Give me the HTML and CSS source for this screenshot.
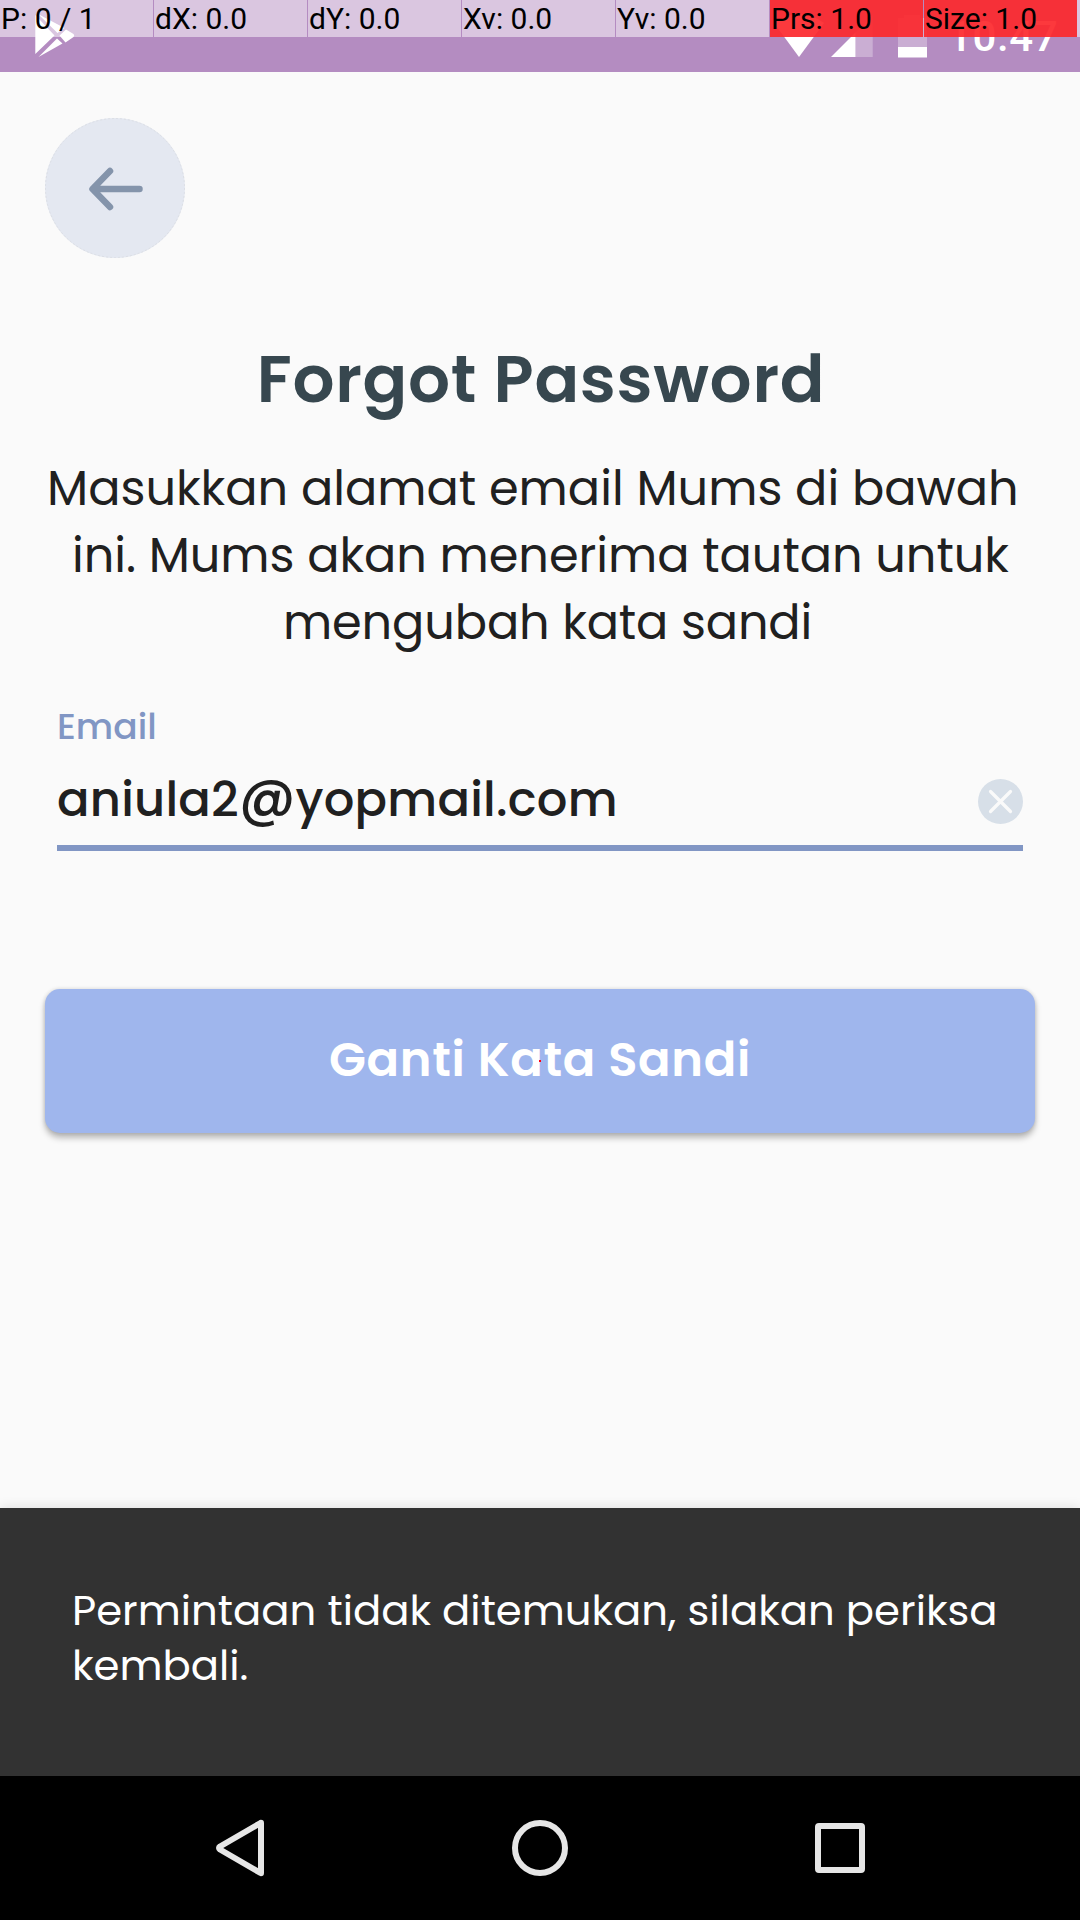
FILE: index.html
```html
<!DOCTYPE html>
<html lang="id">
<head>
<meta charset="utf-8">
<title>Forgot Password</title>
<link rel="stylesheet" href="styles.css">
</head>
<body>
<div class="screen">
  <header class="status">
    <svg class="status-icons" viewBox="0 0 1080 72" width="1080" height="72">
      <g fill="#fff">
        <path d="M35.300 15v39L54.500 35.500zM38 14l19.500 19 7-5zM59.500 35.500l6.500-6 7.500 4.500q1.500 1.500 0 3l-8 5.500zM57 38.500l5.500 5-24 13.500z"/>
        <path d="M774 23q25-18 50 0l-25 34z"/>
        <path d="M831 57l24.500-24.500V57z"/>
        <path opacity=".3" d="M855.500 32.500L872.700 15v42h-17.200z"/>
        <path opacity=".3" d="M898 18h6v-3h16v3h7v29h-29z"/>
        <path d="M898 47h29v10.500h-29z"/>
      </g>
    </svg>
    <span class="clock">10.47</span>
    <div class="pointer">
      <span class="cell">P: 0 / 1</span>
      <span class="cell">dX: 0.0</span>
      <span class="cell">dY: 0.0</span>
      <span class="cell">Xv: 0.0</span>
      <span class="cell">Yv: 0.0</span>
      <span class="cell hot">Prs: 1.0</span>
      <span class="cell hot">Size: 1.0</span>
      <span class="tail"></span>
    </div>
  </header>
  <main class="content">
    <button class="back" aria-label="Back">
      <svg viewBox="0 0 140 140" width="140" height="140" fill="none" stroke="#8494ab" stroke-width="6.500" stroke-linecap="round" stroke-linejoin="round"><circle cx="70" cy="70" r="69.500" stroke="#dcdfe5" stroke-width="1" stroke-dasharray="2 2" stroke-linecap="butt"/><path d="M94.500 71H48M65 53L47.500 71 65 89"/></svg>
    </button>
    <h1 class="title">Forgot Password</h1>
    <p class="lead"><span class="l1">Masukkan alamat email Mums di bawah</span><span class="l2">ini. Mums akan menerima tautan untuk</span><span class="l3">mengubah kata sandi</span></p>
    <div class="field">
      <label class="label">Email</label>
      <div class="row">
        <span class="value">aniula2<span class="at">@</span>yopmail.com</span>
        <svg class="clear" viewBox="0 0 45 45" width="45" height="45"><circle cx="22.500" cy="22.500" r="22.500" fill="#d7dfe8"/><path d="M12.500 12.500l20 20M32.500 12.500l-20 20" stroke="#fafafa" stroke-width="3.200" stroke-linecap="round"/></svg>
      </div>
    </div>
    <button class="submit"><span>Ganti Kata Sandi</span><i class="dot"></i></button>
  </main>
  <div class="snackbar"><p class="message">Permintaan tidak ditemukan, silakan periksa<br>kembali.</p></div>
  <nav class="nav">
    <svg viewBox="0 0 60 60" width="60" height="60"><path d="M51 5v50q0 .5-.5 0L10 31.500q-2-1.500 0-3L50.500 5q.5-.5.5 0z"/></svg>
    <svg viewBox="0 0 60 60" width="60" height="60"><circle cx="30" cy="30" r="25"/></svg>
    <svg viewBox="0 0 60 60" width="60" height="60"><rect x="8" y="8" width="44" height="44" rx="1"/></svg>
  </nav>
</div>
</body>
</html>
```
FILE: styles.css
```css
* { box-sizing: border-box; }
body {
  margin: 0;
  font-family: Poppins, Inter, "Open Sans", sans-serif;
  font-feature-settings: "cv11" 1;
  color: #202020;
}
h1, p { margin: 0; }
button { border: 0; padding: 0; font: inherit; font-feature-settings: inherit; }
.screen {
  width: 1080px;
  height: 1920px;
  display: flex;
  flex-direction: column;
  background: #fafafa;
  overflow: hidden;
}
.status {
  position: relative;
  height: 72px;
  flex: none;
  background: #b48cc1;
}
.status-icons { display: block; }
.clock {
  position: absolute;
  left: 948px;
  top: 12px;
  line-height: 50px;
  font-family: Roboto, sans-serif;
  font-size: 42px;
  font-weight: 500;
  letter-spacing: .6px;
  color: #fff;
}
.pointer {
  position: absolute;
  left: 0;
  top: 0;
  display: flex;
  gap: 1px;
}
.cell {
  width: 153px;
  height: 37px;
  padding-left: 1px;
  font: 30px/37px Roboto, sans-serif;
  color: #000;
  white-space: nowrap;
  background: rgba(255, 255, 255, .5);
}
.hot { background: rgba(252, 40, 45, .92); }
.tail {
  width: 3px;
  height: 37px;
  margin-left: -1px;
  background: rgba(255, 255, 255, .5);
}
.content {
  flex: 1;
  display: flex;
  flex-direction: column;
  padding: 46px 45px 0;
}
.back {
  width: 140px;
  height: 140px;
  border-radius: 50%;
  background: #e4e8f1;
}
.back svg { display: block; }
.title {
  margin-top: 81px;
  padding-left: 2px;
  line-height: 80px;
  font-size: 66px;
  font-weight: 600;
  letter-spacing: .7px;
  color: #37474f;
  text-align: center;
}
.lead {
  margin-top: 36px;
  display: flex;
  flex-direction: column;
  font-size: 47.800px;
  line-height: 67px;
  white-space: nowrap;
}
.lead span { align-self: flex-start; }
.l1 { margin-left: 2px; }
.l2 { margin-left: 27px; letter-spacing: -.04px; }
.l3 { margin-left: 238px; letter-spacing: -.13px; }
.field {
  margin: 46px 12px 0;
  height: 149px;
  border-bottom: 6px solid #8196c4;
}
.label {
  display: block;
  line-height: 50px;
  font-size: 36px;
  font-weight: 500;
  color: #8196c4;
}
.row {
  margin-top: 18px;
  height: 60px;
  display: flex;
  justify-content: space-between;
  align-items: center;
}
.value { font-size: 48px; font-weight: 500; line-height: 60px; letter-spacing: .22px; }
.at { font-size: 55px; line-height: 1px; }
.clear { margin-top: 3px; }
.submit {
  position: relative;
  margin-top: 138px;
  height: 144px;
  padding-bottom: 3px;
  border-radius: 15px;
  background: #9fb6ed;
  box-shadow: 0 5px 6px rgba(0, 0, 0, .26), 0 0 4px rgba(0, 0, 0, .14);
  color: #fff;
  font-size: 48px;
  font-weight: 600;
  letter-spacing: .7px;
}
.dot {
  position: absolute;
  left: 494px;
  top: 71px;
  width: 2px;
  height: 2px;
  background: #ff0010;
}
.snackbar {
  height: 268px;
  padding: 75px 72px 0;
  background: #323232;
  color: #fff;
  box-shadow: 0 0 12px rgba(0, 0, 0, .12);
}
.message { font-size: 41.800px; line-height: 55px; white-space: nowrap; }
.nav {
  height: 144px;
  padding: 0 210px;
  display: flex;
  justify-content: space-between;
  align-items: center;
  background: #000;
}
.nav svg { fill: none; stroke: #e6e6e6; stroke-width: 6; stroke-linejoin: round; }
```
